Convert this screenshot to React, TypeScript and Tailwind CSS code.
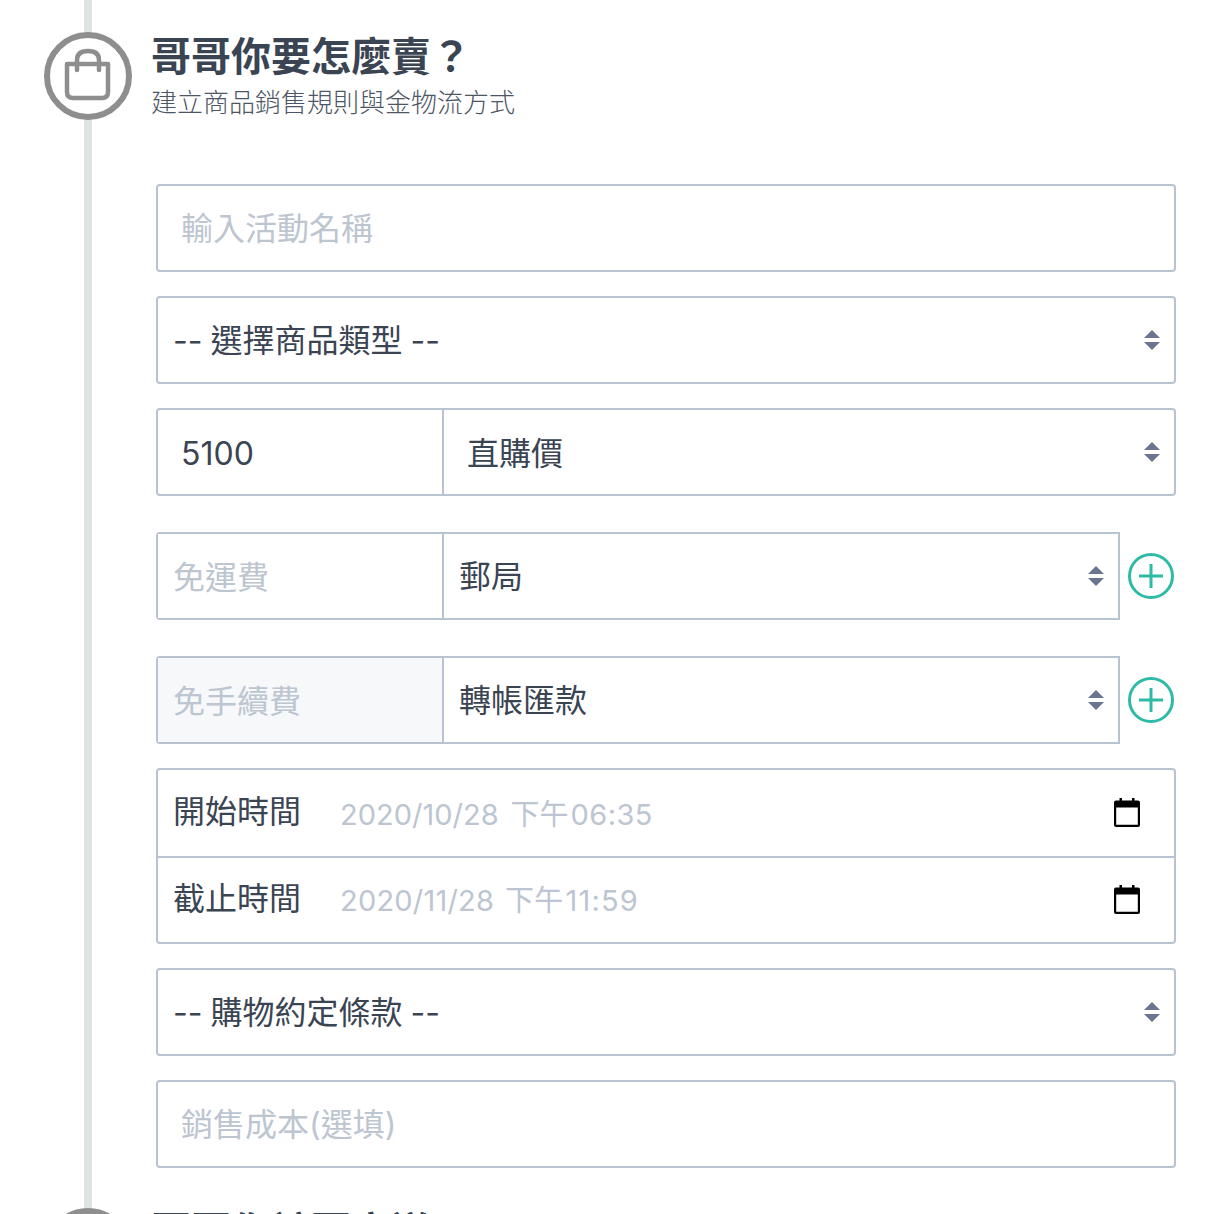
import React from "react";

const FONT = "font-['Inter','Noto_Sans_CJK_TC',sans-serif]";

function Arrows() {
  return (
    <svg width="16" height="20" viewBox="0 0 16 20" className="shrink-0 text-[#6b7590]">
      <path d="M8 0 L16 8 H0 Z M0 12 H16 L8 20 Z" fill="currentColor" />
    </svg>
  );
}

function Plus() {
  return (
    <svg width="48" height="48" viewBox="0 0 48 48" fill="none" stroke="#2dbba6" strokeWidth="3" className="shrink-0">
      <circle cx="24" cy="24" r="21.5" />
      <path d="M24 12 V36 M12 24 H36" strokeWidth="3" />
    </svg>
  );
}

function Bag() {
  return (
    <svg width="48" height="56" viewBox="0 0 48 56" fill="none" stroke="#8e8e8e" strokeWidth="4.5" strokeLinecap="round" strokeLinejoin="round">
      <path d="M3 16 H44 V44 Q44 50 38 50 H9 Q3 50 3 44 Z" />
      <path d="M13 22 V12 Q13 3 24 3 Q35 3 35 12 V22" />
    </svg>
  );
}

function Calendar() {
  return (
    <svg width="28" height="30" viewBox="0 0 28 30" className="shrink-0">
      <path d="M6.5 0 H9 V2.5 H19 V0 H21.5 V2.5 H25 Q27 2.5 27 4.5 V27 Q27 29 25 29 H3 Q1 29 1 27 V4.5 Q1 2.5 3 2.5 H6.5 Z M3.2 9.5 V26.8 H24.8 V9.5 Z" fill="#000" fillRule="evenodd" />
    </svg>
  );
}

function TextBox({ placeholder }: { placeholder: string }) {
  return (
    <input
      placeholder={placeholder}
      className="block h-[88px] w-full rounded border-2 border-[#b9c2d0] bg-white pl-[23px] pr-6 text-[32px] text-[#3a4453] outline-none placeholder:text-[#bcc5d0]"
    />
  );
}

function SelectBox({ text }: { text: string }) {
  return (
    <div className="flex h-[88px] w-full items-center justify-between rounded border-2 border-[#b9c2d0] bg-white pl-[15px] pr-[14px] text-[32px] text-[#3a4453]">
      <span className="pt-[2px] [word-spacing:-1px]">{text}</span>
      <Arrows />
    </div>
  );
}

function AddRow({ label, value, shaded }: { label: string; value: string; shaded?: boolean }) {
  return (
    <div className="flex items-center">
      <div className="flex h-[88px] flex-1 rounded-l border-2 border-[#b9c2d0]">
        <div className={`flex w-[286px] items-center border-r-2 border-[#b9c2d0] pl-[15px] text-[32px] text-[#bcc5d0] ${shaded ? "bg-[#f6f8fa]" : "bg-white"}`}>
          <span className="pt-[3px]">{label}</span>
        </div>
        <div className="flex flex-1 items-center justify-between pl-[15px] pr-[14px] text-[32px] text-[#3a4453]">
          <span className="pt-[2px]">{value}</span>
          <Arrows />
        </div>
      </div>
      <div className="ml-[7px] mr-[2px] flex w-[47px] justify-center">
        <Plus />
      </div>
    </div>
  );
}

function DateRow({
  label,
  date,
  ampm,
  time,
  dateClass,
  timeClass,
  rowClass,
  gapClass,
}: {
  label: string;
  date: string;
  ampm: string;
  time: string;
  dateClass: string;
  timeClass: string;
  rowClass: string;
  gapClass: string;
}) {
  return (
    <div className={`flex items-center pl-[15px] pr-[33px] ${rowClass}`}>
      <span className="w-[167px] pb-[2px] text-[32px] text-[#3a4453]">{label}</span>
      <span className={`flex flex-1 items-center text-[29px] text-[#bcc5d1] ${dateClass}`}>
        <span>{date}</span>
        <span className={gapClass}>{ampm}</span>
        <span className={timeClass}>{time}</span>
      </span>
      <Calendar />
    </div>
  );
}

export default function App() {
  return (
    <div className={`relative h-[1214px] w-[1230px] overflow-hidden bg-white ${FONT}`}>
      <div className="absolute bottom-0 left-[84px] top-0 w-2 bg-[#dfe3e4]" />

      <div className="relative pl-[44px] pr-[54px] pt-8">
        <div className="flex items-start">
          <div className="flex h-[88px] w-[88px] shrink-0 items-center justify-center rounded-full border-[6px] border-[#8e8e8e] bg-white">
            <Bag />
          </div>
          <div className="ml-[20px] -translate-x-[1px]">
            <h2 className="pt-[1px] text-[40px] font-bold leading-[48px] text-[#3a4453]">哥哥你要怎麼賣？</h2>
            <p className="mt-[2px] text-[26px] font-light leading-[40px] text-[#4d5664]">建立商品銷售規則與金物流方式</p>
          </div>
        </div>

        <div className="ml-[112px] mt-[61px] flex flex-col">
          <TextBox placeholder="輸入活動名稱" />
          <div className="mt-6">
            <SelectBox text="-- 選擇商品類型 --" />
          </div>
          <div className="mt-6 flex h-[88px] rounded border-2 border-[#b9c2d0]">
            <div className="flex w-[286px] items-center border-r-2 border-[#b9c2d0] pl-[23px] text-[32px] text-[#3a4453]">
              <span className="pt-[3px]">5100</span>
            </div>
            <div className="flex flex-1 items-center justify-between pl-[23px] pr-[14px] text-[32px] text-[#3a4453]">
              <span className="pt-[3px]">直購價</span>
              <Arrows />
            </div>
          </div>
          <div className="mt-9">
            <AddRow label="免運費" value="郵局" />
          </div>
          <div className="mt-9">
            <AddRow label="免手續費" value="轉帳匯款" shaded />
          </div>
          <div className="mt-6 rounded border-2 border-[#b9c2d0]">
            <DateRow
              label="開始時間"
              date="2020/10/28"
              ampm="下午"
              time="06:35"
              dateClass="pt-1"
              timeClass="ml-[2px] tracking-[0.4px]"
              rowClass="h-[86px]"
              gapClass="ml-[12px]"
            />
            <div className="border-t-2 border-[#b9c2d0]">
              <DateRow
                label="截止時間"
                date="2020/11/28"
                ampm="下午"
                time="11:59"
                dateClass="tracking-[0.2px] pt-[2px]"
                timeClass="ml-[2px] tracking-[1.2px]"
                rowClass="h-[84px]"
                gapClass="ml-[11px]"
              />
            </div>
          </div>
          <div className="mt-6">
            <SelectBox text="-- 購物約定條款 --" />
          </div>
          <div className="mt-6">
            <TextBox placeholder="銷售成本(選填)" />
          </div>
        </div>

        <div className="mt-10 flex items-start">
          <div className="h-[88px] w-[88px] shrink-0 rounded-full border-[6px] border-[#8e8e8e] bg-white" />
          <h2 className="ml-[19px] text-[40px] font-bold leading-[48px] text-[#3a4453]">哥哥你該要寄送</h2>
        </div>
      </div>
    </div>
  );
}
